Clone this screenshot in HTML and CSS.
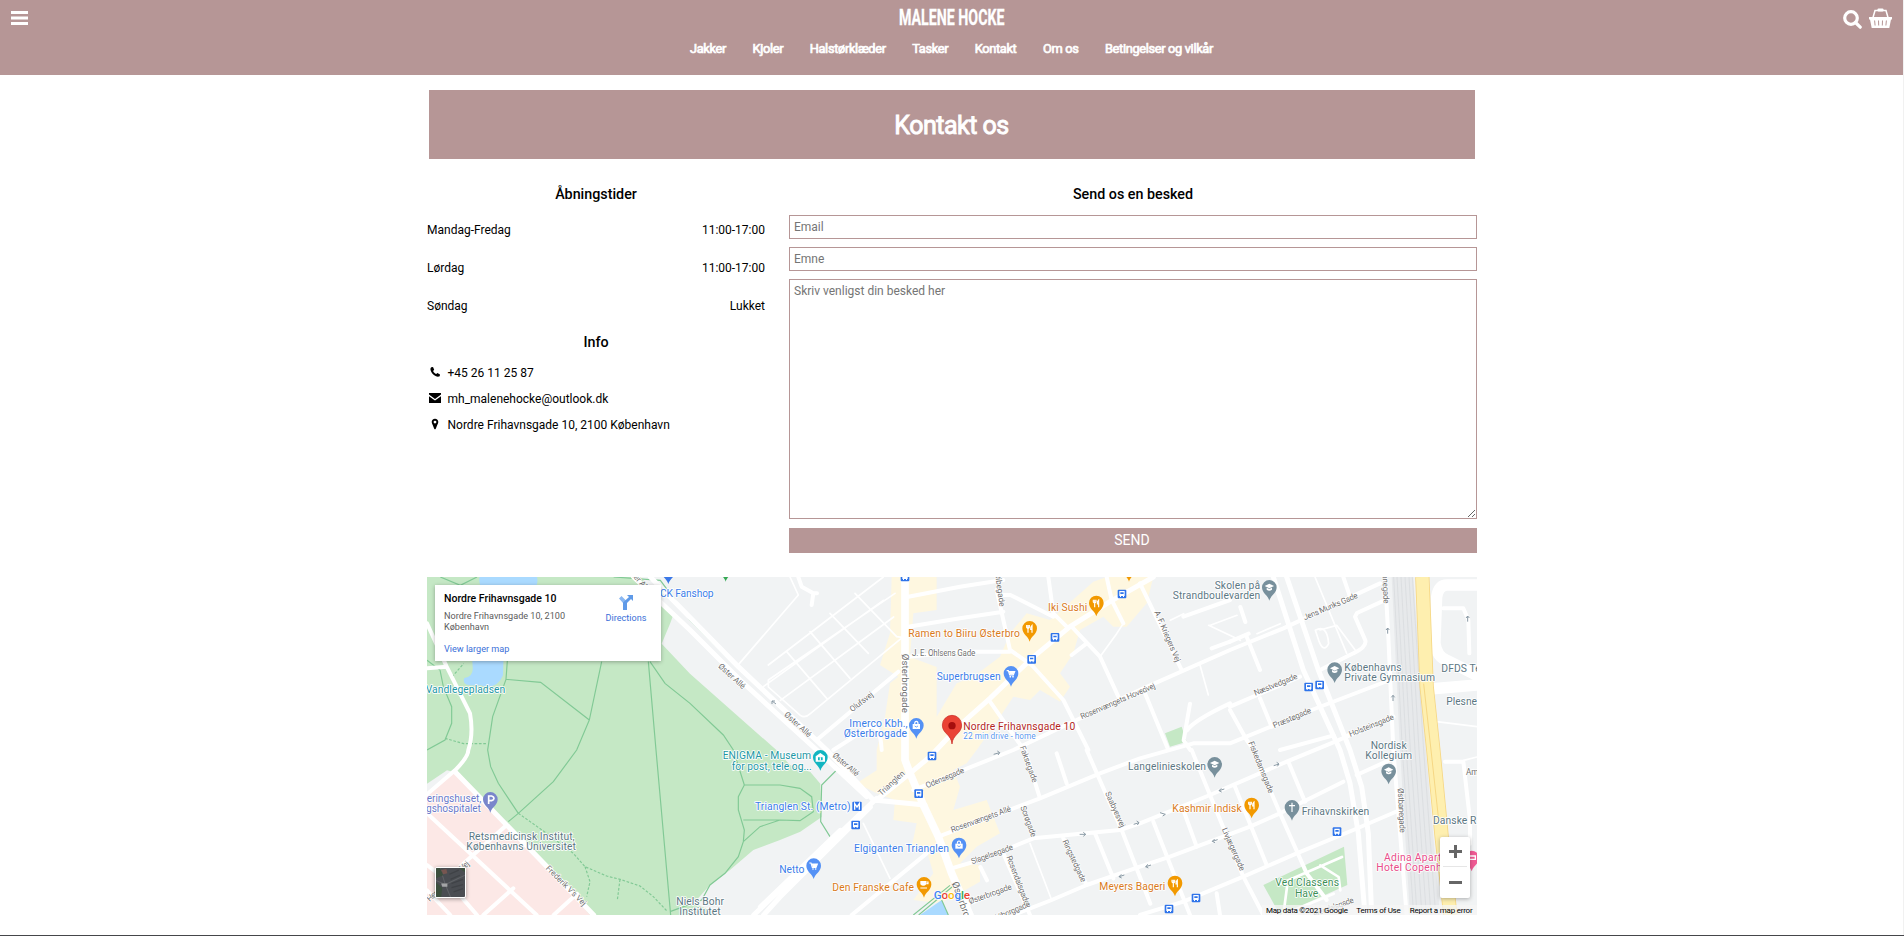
FILE: index.html
```html
<!DOCTYPE html>
<html lang="da">
<head>
<meta charset="utf-8">
<title>Malene Hocke - Kontakt os</title>
<link rel="stylesheet" href="styles.css">
</head>
<body>
<header class="top">
  <div class="top-row">
    <svg class="burger" viewBox="0 0 17 14"><path d="M0 0h17v3H0zM0 5.5h17v3H0zM0 11h17v3H0z"/></svg>
    <svg class="brand" viewBox="0 0 106 24"><text x="0" y="20" textLength="105.5" lengthAdjust="spacingAndGlyphs">MALENE HOCKE</text></svg>
    <div class="tools">
      <svg class="search" viewBox="0 0 19 19"><circle cx="8" cy="8" r="6.3"/><path d="M12.5 12.5l4.7 4.7"/></svg>
      <svg class="basket" viewBox="0 0 23 20"><path class="handle" d="M4 9.500L6 2.500H17L19 9.500"/><rect x="8.500" y="0.500" width="6" height="3" rx="1"/><path d="M0 9h23v2.500h-1L20.300 20H2.700L1 11.500H0z"/><path class="slots" d="M5.600 12.500l.5 5M9.500 12.500l.2 5M13.500 12.500l-.2 5M17.400 12.500l-.5 5"/></svg>
    </div>
  </div>
  <nav class="nav"><a>Jakker</a><a>Kjoler</a><a>Halstørklæder</a><a>Tasker</a><a>Kontakt</a><a>Om os</a><a>Betingelser og vilkår</a></nav>
</header>
<main class="page">
  <h1 class="banner">Kontakt os</h1>
  <div class="columns">
    <section class="facts">
      <h2 class="heading">Åbningstider</h2>
      <dl class="hours">
        <div><dt>Mandag-Fredag</dt><dd>11:00-17:00</dd></div>
        <div><dt>Lørdag</dt><dd>11:00-17:00</dd></div>
        <div><dt>Søndag</dt><dd>Lukket</dd></div>
      </dl>
      <h2 class="heading heading-info">Info</h2>
      <ul class="info">
        <li><svg viewBox="0 0 12 12"><path d="M2.200 1.200L4 .9 5.200 3.700 4.100 4.900C4.700 6.300 5.700 7.400 7.200 8.100L8.400 7 11 8.400 10.700 10.300C9.500 11 8 10.900 6.500 10.100 4.200 8.900 2.500 6.900 1.700 4.600 1.300 3.300 1.300 2 2.200 1.200Z"/></svg>+45 26 11 25 87</li>
        <li><svg viewBox="0 0 12 12"><path d="M0 1h12v1.500L6 7 0 2.500zM0 4.200L6 8.600 12 4.200V11H0z"/></svg>mh_malenehocke@outlook.dk</li>
        <li><svg viewBox="0 0 12 12"><path fill-rule="evenodd" d="M6 .8C4 .8 2.700 2.200 2.700 4S4.300 7.600 5.200 10.800Q6 11.900 6.800 10.800C7.700 7.600 9.300 5.800 9.300 4S8 .8 6 .8zM6 2.700A1.400 1.400 0 1 1 6 5.500 1.400 1.400 0 1 1 6 2.700z"/></svg>Nordre Frihavnsgade 10, 2100 København</li>
      </ul>
    </section>
    <form class="message">
      <h2 class="heading">Send os en besked</h2>
      <input type="text" placeholder="Email">
      <input type="text" placeholder="Emne">
      <textarea placeholder="Skriv venligst din besked her"></textarea>
      <button type="button">SEND</button>
    </form>
  </div>
  <section class="map">
    <svg class="tiles" viewBox="0 0 3150 1014">
      <defs>
        <path id="drop" d="M0 36C-4 20-22 14-22-4A22 22 0 1 1 22-4C22 14 4 20 0 36Z"/>
        <g id="food"><use href="#drop" fill="#f29900"/><path class="glyph" d="M-9-14v7q4 6 8 0v-7M-5-14V9M7 9V-13q-5 4-4 12h4"/></g>
        <g id="school"><use href="#drop" fill="#78909c"/><path fill="#fff" d="M-14-8L0-15 14-8 0-1zM-8-3v6q8 6 16 0v-6L0 1z"/></g>
        <g id="cart"><use href="#drop" fill="#5491f5"/><path class="glyph" d="M-13-12h5l4 13h11l4-10h-17"/><path fill="#fff" d="M-6-9h17L7 0h-10z"/><circle cx="-2" cy="6" r="2.500" fill="#fff"/><circle cx="6" cy="6" r="2.500" fill="#fff"/></g>
        <g id="bag"><use href="#drop" fill="#5491f5"/><path fill="#fff" d="M-11-8h22V7h-22z"/><path class="glyph" d="M-5-8q0-8 5-8t5 8"/><path d="M-5-2q5 6 10 0" fill="none" stroke="#5491f5" stroke-width="2.500"/></g>
        <g id="bus"><rect x="-13" y="-13" width="26" height="26" rx="3" fill="#2f74ea"/><path fill="#fff" fill-rule="evenodd" d="M-8-9H8V6H6v3H3V6h-6v3h-3V6h-2zM-5-5v5H5v-5z"/></g>
      </defs>
      <rect width="3150" height="1014" fill="#f1f3f4"/>
      <!-- parks, hospital grounds, water -->
      <path class="park" d="M0 0H640L740 110 730 138 704 200 789 290 1049 520 1090 565 1150 585 1180 620 1184 720 1120 764 1059 789 979 819 909 879 849 924 800 979 880 1014H0z"/>
      <path fill="#f1f3f4" d="M0 620L60 580 100 590 0 680z"/>
      <path class="hospital" d="M0 652L84 580 490 1014H0z"/>
      <path class="water" d="M158 0H330Q340 40 280 60H190Q150 30 158 0zM135 230H230L228 295Q210 340 160 325 100 330 112 303 140 300 137 270z"/>
      <path class="shops" d="M1394 0L1389 169 1359 264 1414 299 1389 319 1374 419 1349 519V580L1289 619 1349 649 1404 669 1399 729 1469 739 1454 809 1499 819 1519 889 1459 969 1539 979 1579 959 1659 914V864L1599 859 1649 809 1719 769 1679 669 1579 699 1599 629 1579 579 1619 559 1649 519 1719 419 1759 359 1809 369 1839 339 1899 374 1929 329 1899 289 1939 229 1959 159 2029 119 2059 149 2099 149 2159 79 2179 0H2039L1999 14 1869 129 1799 109 1749 169 1719 239 1639 299 1589 319 1529 419 1529 270 1449 240 1459 109 1529 99V0z"/>
      <path class="park" d="M2214 469L2264 449 2279 494 2229 509zM2751 809L2761 924 2559 1014 2509 924z"/>
      <path class="water" d="M1479 1014L1544 969 1564 1014z"/>
      <path fill="#e7e9eb" d="M2894 0H2959L2997 519 3039 1014H2949L2919 519z"/>
      <g class="rails"><path d="M2900 0L2926 519 2960 1014M2910 0L2938 519 2970 1014M2922 0L2950 519 2985 1014M2934 0L2964 519 2998 1014M2946 0L2976 519 3012 1014M2956 0L2990 519 3026 1014"/></g>
      <!-- footpaths -->
      <g class="paths">
        <path d="M40 0L100 25 150 0M560 0L700 10 789 129 929 269M0 250L39 279 49 329 74 389V439L54 489 0 519M241 251L237 307 341 316 487 429 449 519 379 614 274 709 244 734M524 254L487 429M237 307L197 419 182 519 191 569 214 619 274 709M664 254L687 519 731 1014M669 254L714 319 789 379 889 474 919 519 952 624 934 659V699L952 759 949 794 934 839 894 889 849 924 824 969 731 1003M952 624H1059L1119 634 1154 659 1159 704 1119 731 1059 729H949M1059 729L999 749 949 794M1229 579L1184 624 1181 734 1209 779M1459 1014L1569 925M1475 1014L1575 930M1544 969L1564 1014"/>
        <path stroke-dasharray="8 5" d="M274 709L359 769 439 829 474 869 539 897 579 907 639 927 679 959 719 1001M474 869L489 914 479 959M579 907L571 969M54 484L110 500H180M75 300L110 260"/>
      </g>
      <!-- thin lanes -->
      <g class="lane">
        <path d="M1369 0L1024 264M1404 49L1024 309V330L1120 415Q1134 425 1150 410L1429 179M1284 49L1409 179 1430 182M1209 109L1324 229M1149 164L1269 304M1079 224L1199 364M1009 329L1369 70M1060 370L1400 120M1089 0L1114 54 929 269M1309 739L1389 904M1809 799L1874 969M2089 139L2069 170 2019 239M2319 264L2344 354M2664 0L2759 229M2679 159L2729 145 2785 220M2665 160Q2700 140 2705 200 2690 230 2675 190zM3029 434L3150 449M2230 130L2270 110M2345 145L2440 190M2350 145L2430 115M2490 170L2560 140M3110 550L3150 540"/>
      </g>
      <!-- streets -->
      <g class="street">
        <path d="M0 139L59 269 129 409Q140 470 124 519 124 540 84 580L0 652M0 274L59 269M1114 0L1124 29 1159 49H1170M1159 49L1154 84M1444 59L1599 29 1729 9M1444 149L1599 124 1729 104M1444 239L1599 224H1749M1169 489L1414 284M1219 519L1329 449Q1360 440 1364 519M1864 0L1879 109 1919 149M1709 39L1749 219 1814 264 1909 369 1984 519M1729 54H1750L1879 119M2039 0L2054 69 2089 139M1934 149L2019 239 2074 359M1934 234L1979 199M1689 374L1784 509M2139 19L2264 279M2154 349L2224 519M2269 119L2409 69M2354 214L2409 194"/>
        <path d="M1459 639L1759 519 1949 429 2149 334 2409 219 2569 154 2859 19M1534 779L1839 664 2019 589 2139 544 2299 499 2409 499 2654 399 2889 309M1574 874L1659 849 1819 784 2079 759 2139 739 2349 654 2579 554 2710 500 2899 419M2139 869L2229 839 2469 749 2559 709 2749 614M2139 1014L2269 974 2449 899 2609 829 2779 759 2919 699M1759 1014L1874 969 1979 924 2139 869M1794 519L1839 664M1979 519L2084 759 2170 980M2004 769L2059 904M1909 784L1979 924M1729 829L1809 1014M1889 529L1919 619M1629 979L1749 929M1660 870L1680 910M1274 1014L1499 829"/>
        <path d="M2294 519L2349 654 2449 899 2509 1014M2479 519L2559 709 2639 889 2699 969M2179 734L2289 1014M2269 699L2309 809M2424 629L2519 864M2584 554L2634 674M2369 949L2379 1014M2789 594L2899 544M2874 0L2884 179 2899 519 2939 1014M2679 279L2779 229Q2820 210 2815 190L2784 119 2790 108 2864 74M2749 0L2769 59M2409 389L2619 299M2289 380L2270 490 2290 519M2280 460Q2300 430 2409 379M2409 399L2459 489 2480 519M2499 364L2534 449M2459 179L2499 279M2409 194L2465 170M2440 90L2455 135M2754 479L2899 419M2559 519L2720 475M3049 94H3109L3124 129 3127 229M3054 554H3109L3129 729V800"/>
        <path d="M2745 840L2560 920M2680 865L2735 900 2740 940M2569 1014L2580 930M2600 1000L2720 950" stroke-width="8"/>
        <path d="M0 709L329 1014M239 744L99 869M259 934L169 1014M0 864L60 910 150 1014M0 940L70 1014M450 950L380 1014"/>
      </g>
      <g class="avenue">
        <path d="M84 584L500 1014M620 0L789 159 939 309 1169 519 1319 659M670 0L934 269 1199 519 1339 669 1494 684M1349 664L1059 939 980 1014M1330 690L1059 960 1010 1014M1240 760L1000 990M1349 669L1449 589 1509 539 1599 444 1689 364 1814 244 1929 149 2049 74 2179 0M2539 0L2629 279 2739 519 2769 619 2794 769 2814 1014M2579 0L2674 279 2769 519 2804 629 2824 769 2834 1014"/>
        <path d="M1434 0V549L1449 589 1489 684 1534 779 1574 889 1629 1014" stroke-width="23"/>
        <path d="M3150 24H3060Q3035 24 3029 60L3024 199Q3030 240 3060 250L3150 295M3009 336L3150 324" stroke-width="34"/>
      </g>
      <path d="M2986 0L2999 329 3019 519 3044 779 3070 1014" fill="none" stroke="#f6d784" stroke-width="43"/>
      <path d="M2986 0L2999 329 3019 519 3044 779 3070 1014" fill="none" stroke="#feefaf" stroke-width="38"/>
      <path d="M2990 320L3012 519 3034 720" fill="none" stroke="#f6d784" stroke-width="3"/>
      <!-- street names -->
      <g class="road-name">
        <text transform="translate(872 270) rotate(42)" textLength="100">Øster Allé</text>
        <text transform="translate(1070 415) rotate(42)" textLength="100">Øster Allé</text>
        <text transform="translate(1215 538) rotate(40)" textLength="95">Øster Allé</text>
        <text transform="translate(1276 406) rotate(-38)" textLength="82">Olufsvej</text>
        <text class="big" transform="translate(1426 230) rotate(90)" textLength="178">Østerbrogade</text>
        <text class="big" transform="translate(1574 918) rotate(70)" textLength="175">Østerbrogade</text>
        <text x="1455" y="238" textLength="190">J. E. Ohlsens Gade</text>
        <text transform="translate(1704 -10) rotate(82)" textLength="100">Ribegade</text>
        <text transform="translate(1964 427) rotate(-23)" textLength="242">Rosenvængets Hovedvej</text>
        <text transform="translate(2182 105) rotate(67)" textLength="165">A. F. Kriegers Vej</text>
        <text transform="translate(2633 130) rotate(-23)" textLength="175">Jens Munks Gade</text>
        <text transform="translate(2865 -55) rotate(88)" textLength="135">Østbanegade</text>
        <text transform="translate(2485 356) rotate(-22)" textLength="138">Næstvedgade</text>
        <text transform="translate(2542 454) rotate(-23)" textLength="122">Præstøgade</text>
        <text transform="translate(2770 480) rotate(-22)" textLength="143">Holsteinsgade</text>
        <text transform="translate(2464 497) rotate(68)" textLength="165">Fiskedamsgade</text>
        <text transform="translate(1363 658) rotate(-43)" textLength="98">Trianglen</text>
        <text transform="translate(1500 634) rotate(-23)" textLength="123">Odensegade</text>
        <text transform="translate(1778 510) rotate(70)" textLength="115">Faksegade</text>
        <text transform="translate(1780 690) rotate(70)" textLength="98">Sorøgade</text>
        <text transform="translate(1575 767) rotate(-20)" textLength="190">Rosenvængets Allé</text>
        <text transform="translate(1636 862) rotate(-20)" textLength="132">Slagelsegade</text>
        <text transform="translate(1629 982) rotate(-20)" textLength="135">Østerbrogade</text>
        <text transform="translate(1738 840) rotate(69)" textLength="155">Rosendalsgade</text>
        <text transform="translate(1906 793) rotate(65)" textLength="137">Ringstedgade</text>
        <text transform="translate(2034 648) rotate(66)" textLength="115">Saabyesvej</text>
        <text transform="translate(2384 757) rotate(66)" textLength="138">Livjægergade</text>
        <text transform="translate(2912 634) rotate(87)" textLength="134">Østbanegade</text>
        <text transform="translate(2660 1020) rotate(-20)" textLength="130">Arendalsgade</text>
        <text transform="translate(1710 1030) rotate(-23)" textLength="110">Viborggade</text>
        <text transform="translate(355 875) rotate(45)" textLength="160">Frederik V's Vej</text>
        <text transform="translate(8 975) rotate(-43)" textLength="165">Henrik Harpes Vej</text>
        <text x="3117" y="594">Am</text>
        <text transform="translate(595 -25) rotate(48)" textLength="100">Øster Allé</text>
      </g>
      <g class="arrows"><path d="M1035 372l12 9m-12-9h9m-9 0v9M1700 532l18-5m-7-5l7 5-5 7M1958 772h18m-7-6l7 6-7 6M2120 742l16-5m-7-5l7 5-5 7M2215 712l-16-5m16 5l-8 5M2540 566l16-5m-7-5l7 5-5 7M2392 636l-16 5m7-7l-7 7 8 4M2372 788l-16 5m7-7l-7 7 8 4M2172 864l-16 5m7-7l-7 7 8 4M2092 894l-16 5m7-7l-7 7 8 4M2882 170v-17m-5 6l5-6 5 6M2898 372v-17m-5 6l5-6 5 6M3122 134v-17m-5 6l5-6 5 6"/></g>
      <!-- places -->
      <use href="#drop" x="724" y="-15" fill="#3b78e7"/><use href="#drop" x="896" y="-22" fill="#34a853"/>
      <g class="label blue">
        <text x="699" y="60" textLength="161">CK Fanshop</text>
        <text x="1529" y="309" textLength="192">Superbrugsen</text>
        <text x="1267" y="449" textLength="175">Imerco Kbh.,</text><text x="1250" y="480" textLength="190">Østerbrogade</text>
        <text x="984" y="698" textLength="287">Trianglen St. (Metro)</text>
        <text x="1281" y="825" textLength="285">Elgiganten Trianglen</text>
        <text x="1057" y="887" textLength="75">Netto</text>
      </g>
      <g class="label orange">
        <text x="1444" y="179" textLength="335">Ramen to Bíiru Østerbro</text>
        <text x="1863" y="102" textLength="118">Iki Sushi</text>
        <text x="2236" y="705" textLength="208">Kashmir Indisk</text>
        <text x="1216" y="943" textLength="245">Den Franske Cafe</text>
        <text x="2017" y="938" textLength="198">Meyers Bageri</text>
      </g>
      <g class="label slate">
        <text x="2363" y="35" textLength="136">Skolen på</text><text x="2237" y="66" textLength="263">Strandboulevarden</text>
        <text x="2752" y="281" textLength="172">Københavns</text><text x="2752" y="313" textLength="272">Private Gymnasium</text>
        <text x="3043" y="284" textLength="118">DFDS Te</text><text x="3058" y="383" textLength="92">Plesne</text>
        <text x="2831" y="515" textLength="108">Nordisk</text><text x="2815" y="546" textLength="140">Kollegium</text>
        <text x="2103" y="580" textLength="234">Langelinieskolen</text>
        <text x="2624" y="713" textLength="203">Frihavnskirken</text>
        <text x="3018" y="741" textLength="130">Danske R</text>
        <text x="125" y="788" textLength="318">Retsmedicinsk Institut,</text><text x="118" y="819" textLength="329">Københavns Universitet</text>
        <text x="748" y="984" textLength="143">Niels Bohr</text><text x="757" y="1015" textLength="124">Institutet</text>
      </g>
      <g class="label teal">
        <text x="-4" y="347" textLength="239">Vandlegepladsen</text>
        <text x="887" y="547" textLength="265">ENIGMA - Museum</text><text x="914" y="579" textLength="240">for post, tele og...</text>
      </g>
      <g class="label purple"><text x="-1" y="674" textLength="164">eringshuset,</text><text x="-3" y="705" textLength="165">gshospitalet</text></g>
      <g class="label green"><text x="2545" y="928" textLength="191">Ved Classens</text><text x="2604" y="959" textLength="70">Have</text></g>
      <g class="label pink"><text x="2871" y="851" textLength="172">Adina Apart</text><text x="2848" y="882" textLength="196">Hotel Copenh</text></g>
      <text class="label pin-name" x="1609" y="460" textLength="336">Nordre Frihavnsgade 10</text>
      <text class="label drive" x="1609" y="486" textLength="217">22 min drive - home</text>
      <use href="#food" x="2008" y="82"/><use href="#food" x="1808" y="158"/><use href="#food" x="2474" y="688"/><use href="#food" x="2244" y="922"/><use href="#food" x="2106" y="-22"/>
      <use href="#drop" x="1491" y="926" fill="#f29900"/><path fill="#fff" d="M1480 912h18v10q-9 9-18 0z"/><path class="glyph" d="M1498 915h5v5h-5M1480 933h20"/>
      <use href="#school" x="2527" y="35"/><use href="#school" x="2723" y="282"/><use href="#school" x="2885" y="586"/><use href="#school" x="2363" y="566"/>
      <use href="#drop" x="2595" y="695" fill="#78909c"/><path class="glyph" d="M2595 677v28M2586 686h18" stroke-width="5"/>
      <use href="#cart" x="1752" y="293"/><use href="#cart" x="1160" y="870"/>
      <use href="#bag" x="1468" y="449"/><use href="#bag" x="1596" y="808"/>
      <use href="#drop" x="1180" y="545" fill="#12b5c1"/><path fill="#fff" fill-rule="evenodd" d="M1166 538l14-10 14 10v16h-28zM1173 541v9h14v-9z"/><path class="glyph" d="M1180 541v9"/>
      <use href="#drop" x="190" y="671" fill="#7986cb"/><path d="M185 681v-24h9q7 2 7 7t-7 7h-9" fill="none" stroke="#fff" stroke-width="5"/>
      <use href="#drop" x="3134" y="847" fill="#ef5b94"/><path d="M3120 837h25v10h-25" stroke="#fff" stroke-width="4" fill="none"/>
      <use href="#bus" x="2085" y="51"/><use href="#bus" x="1884" y="181"/><use href="#bus" x="1814" y="247"/><use href="#bus" x="2645" y="330"/><use href="#bus" x="2678" y="324"/><use href="#bus" x="1515" y="537"/><use href="#bus" x="1475" y="650"/><use href="#bus" x="1286" y="744"/><use href="#bus" x="2730" y="764"/><use href="#bus" x="2307" y="963"/><use href="#bus" x="2226" y="996"/><use href="#bus" x="1434" y="0"/>
      <rect x="1276" y="674" width="28" height="28" rx="3" fill="#2f74ea"/><path d="M1283 698v-18l7 10 7-10v18" fill="none" stroke="#fff" stroke-width="4"/>
      <path d="M1575 501C1573 472 1546 470 1546 444A29 29 0 1 1 1604 444C1604 470 1577 472 1575 501Z" fill="#ea4335" stroke="#c5221f" stroke-width="2"/><circle cx="1575" cy="446" r="11" fill="#a50e0e"/>
      <text class="google" x="1520" y="966" textLength="109"><tspan fill="#4285f4">G</tspan><tspan fill="#ea4335">o</tspan><tspan fill="#fbbc05">o</tspan><tspan fill="#4285f4">g</tspan><tspan fill="#34a853">l</tspan><tspan fill="#ea4335">e</tspan></text>
      <rect x="2505" y="984" width="645" height="30" fill="#f5f5f5" opacity=".75"/>
      <g class="legal"><text x="2517" y="1008" textLength="246">Map data ©2021 Google</text><text x="2788" y="1008" textLength="133">Terms of Use</text><text x="2948" y="1008" textLength="189">Report a map error</text></g>
    </svg>
    <aside class="place">
      <div class="place-text"><strong>Nordre Frihavnsgade 10</strong><p>Nordre Frihavnsgade 10, 2100 København</p><a>View larger map</a></div>
      <div class="directions"><svg viewBox="0 0 14 15"><path fill="#8ab8f2" d="M0 3.500L2.500 1 8 6.500V15H4V8z"/><path d="M8 0h6v6l-2-2-4 4v7H4V7.500L10 2z"/></svg>Directions</div>
    </aside>
    <svg class="satellite" viewBox="0 0 28 28"><rect width="28" height="28" fill="#4a4d52"/><path d="M0 12l9 4 19-9M9 16l5 12M9 16L4 0" stroke="#5f6266" stroke-width="1" fill="none"/><path d="M0 14l6 5-1 9H0zM0 0h4l3 7-7 3zM22 0h6v4z" fill="#3c4f3e"/><path d="M5 15h6v3H6z" fill="#a3a5a6"/><path d="M5 2l5-1 1 4-4 1z" fill="#775650"/><path d="M14 11l9-4M15 15l11-4M15 19l11-3M17 23l9-3M13 6l9-4" stroke="#3f4246" stroke-width="1.200"/></svg>
    <div class="zoom"><span class="plus"></span><span class="minus"></span></div>
  </section>
</main>
</body>
</html>
```
FILE: styles.css
```css
* { box-sizing: border-box; }
html { height: 936px; overflow: hidden; }
html::before { content: ""; position: fixed; right: 0; top: 0; width: 1px; height: 100%; background: #f1f1f1; z-index: 2; }
html::after { content: ""; position: fixed; left: 0; bottom: 0; width: 100%; height: 1px; background: #45464a; z-index: 3; }
body { margin: 0; background: #fff; color: #000; font-family: Roboto, "Liberation Sans", sans-serif; font-size: 12px; }

.top { height: 75px; background: #b69696; color: #fff; }
.top-row { display: grid; grid-template-columns: 1fr 106px 1fr; height: 40px; padding: 0 12px 0 11px; }
.burger { width: 17px; height: 14px; margin-top: 11px; fill: #fff; }
.brand { width: 106px; height: 24px; margin: 5px 0 0; overflow: visible; font-size: 22.500px; font-weight: 700; fill: #fff; stroke: #fff; stroke-width: .3px; }
.tools { display: flex; justify-content: flex-end; gap: 7px; }
.search { width: 19px; height: 19px; margin-top: 10px; fill: none; stroke: #fff; stroke-width: 3.200px; stroke-linecap: round; }
.basket { width: 23px; height: 20px; margin-top: 8px; fill: #fff; }
.handle { fill: none; stroke: #fff; stroke-width: 1.500px; }
.slots { stroke: #b69696; stroke-width: 1px; }
.nav { display: flex; justify-content: center; gap: 26.500px; padding-right: 1px; line-height: 18px; font-size: 12.800px; letter-spacing: -.33px; -webkit-text-stroke: .7px #fff; }

.page { width: 1050px; margin: 15px auto 0; }
.banner { height: 69px; margin: 0 2px; padding-right: 1px; background: #b69696; color: #fff; text-align: center; font-size: 25px; line-height: 71px; font-weight: 400; letter-spacing: -.5px; -webkit-text-stroke: .9px #fff; }
.columns { display: grid; grid-template-columns: 338px 688px; gap: 24px; height: 418px; padding-top: 26px; }
.heading { margin: 0; height: 18px; line-height: 19px; text-align: center; font-size: 14.300px; font-weight: 500; }
.hours { margin: 17px 0 0; }
.hours div { display: flex; justify-content: space-between; height: 38px; line-height: 21px; }
.hours dd { margin: 0; }
.heading-info { margin-top: -1px; }
.info { list-style: none; margin: 9px 0 0; padding: 0; }
.info li { display: flex; align-items: center; height: 26px; padding-left: 2px; gap: 6.500px; }
.info svg { width: 12px; height: 12px; margin-top: -3px; }
.message { display: flex; flex-direction: column; gap: 8px; }
.message .heading { margin-bottom: 4px; }
.message input, .message textarea { display: block; width: 100%; margin: 0; padding: 4px; border: 1px solid #b69696; border-radius: 0; background: #fff; font: 12px/15px Roboto, "Liberation Sans", sans-serif; outline: none; }
.message input { height: 24px; padding-top: 3px; }
.message textarea { height: 240px; resize: both; }
.message ::placeholder { color: #757575; }
.message button { height: 25px; margin-top: 1px; padding: 0 2px 0 0; border: 0; background: #b69696; color: #fff; font: 14px/25px Roboto, "Liberation Sans", sans-serif; }

.map { position: relative; height: 338px; overflow: hidden; }
.tiles { display: block; width: 1050px; height: 338px; overflow: visible; font-family: Roboto, sans-serif; }
.park { fill: #c5e8c5; }
.water { fill: #aadaff; }
.hospital { fill: #fce8e6; }
.shops { fill: #fef7e0; }
.rails { fill: none; stroke: #d6d9dc; stroke-width: 2; }
.paths { fill: none; stroke: #81c995; stroke-width: 3.500; }
.lane, .street, .avenue { fill: none; stroke: #fff; stroke-linecap: round; stroke-linejoin: round; }
.lane { stroke-width: 5; }
.street { stroke-width: 12; }
.avenue { stroke-width: 15; }
.glyph { fill: none; stroke: #fff; stroke-width: 3.500; }
.arrows { fill: none; stroke: #8a9aa5; stroke-width: 3; }
.road-name { font-size: 24.500px; fill: #6f6f6f; stroke: #fff; stroke-width: 4; paint-order: stroke; }
.road-name .big { font-size: 29px; }
.label { font-size: 31px; stroke: #fff; stroke-width: 5; stroke-linejoin: round; paint-order: stroke; }
.blue { fill: #3b7de9; }
.orange { fill: #d97a1b; }
.slate { fill: #5c7783; }
.teal { fill: #2297a5; }
.purple { fill: #6b78c9; }
.green { fill: #3d8f57; }
.pink { fill: #e84d8a; }
.pin-name { fill: #b3261e; }
.drive { fill: #5a96ee; font-size: 25px; }
.google { font-size: 35px; font-weight: 500; stroke: #fff; stroke-width: 4; paint-order: stroke; }
.legal { font-size: 24px; fill: #000; }

.place { position: absolute; left: 8px; top: 8px; width: 226px; height: 76px; padding: 6px 9px; display: flex; justify-content: space-between; background: #fff; box-shadow: 0 1px 4px rgba(0, 0, 0, .3); font-size: 9.100px; line-height: 11px; }
.place-text { width: 128px; }
.place strong { display: block; font-size: 10.500px; line-height: 15px; font-weight: 500; white-space: nowrap; }
.place p { margin: 5px 0 11px; color: #5b5b5b; }
.place a, .directions { color: #3a6fd8; }
.directions { width: 52px; display: flex; flex-direction: column; align-items: center; padding-top: 4px; gap: 3px; }
.directions svg { width: 14px; height: 15px; fill: #5f9ae8; }
.satellite { position: absolute; left: 8px; top: 290px; width: 31px; height: 31px; border: 1.500px solid #fff; border-radius: 2px; box-shadow: 0 1px 4px rgba(0, 0, 0, .4); }
.zoom { position: absolute; left: 1013px; top: 260px; width: 30px; height: 61px; background: #fff; border-radius: 2px; box-shadow: 0 1px 4px rgba(0, 0, 0, .3); display: grid; grid-template-rows: 30px 31px; padding: 0 3px; }
.zoom span { background: linear-gradient(#666, #666) center / 13px 3px no-repeat; }
.zoom .plus { background: linear-gradient(#666, #666) center / 13px 3px no-repeat, linear-gradient(#666, #666) center / 3px 13px no-repeat; border-bottom: 1px solid #e6e6e6; }
```
